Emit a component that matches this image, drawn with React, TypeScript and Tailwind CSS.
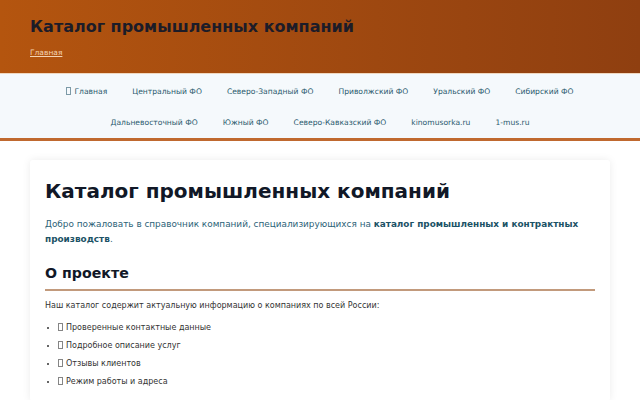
import React from "react";

const Tofu = () => (
  <span className="inline-block w-[5px] h-[8px] border border-current mr-[3px] align-[-1px] opacity-60" />
);

const navRow1 = ["Центральный ФО", "Северо-Западный ФО", "Приволжский ФО", "Уральский ФО", "Сибирский ФО"];
const navRow2 = ["Дальневосточный ФО", "Южный ФО", "Северо-Кавказский ФО", "kinomusorka.ru", "1-mus.ru"];
const items = ["Проверенные контактные данные", "Подробное описание услуг", "Отзывы клиентов", "Режим работы и адреса"];

export default function App() {
  return (
    <div className="min-h-[400px] bg-white" style={{ fontFamily: '"DejaVu Sans", sans-serif' }}>
      <header className="h-[74px] bg-gradient-to-r from-[#b4550f] to-[#8f3f10] px-[30px] pt-[16px] border-b border-[#f0d8c0]">
        <h1 className="text-[16px] font-bold text-[#1c1c28] leading-[22px]">Каталог промышленных компаний</h1>
        <a className="mt-[10px] inline-block text-[7.5px] text-[#f3d3b4] underline leading-[10px]">Главная</a>
      </header>
      <nav className="bg-[#f5f9fc] border-b-[3px] border-[#c0692f] pt-[2px]">
        <div className="flex justify-center gap-x-[25px] h-[31px] items-center">
          <span className="text-[7.6px] text-[#2b5a6e]"><Tofu />Главная</span>
          {navRow1.map((t) => (
            <span key={t} className="text-[7.6px] text-[#2b5a6e]">{t}</span>
          ))}
        </div>
        <div className="flex justify-center gap-x-[25px] h-[31px] items-center">
          {navRow2.map((t) => (
            <span key={t} className="text-[7.6px] text-[#2b5a6e]">{t}</span>
          ))}
        </div>
      </nav>
      <main className="px-[30px] pt-[19px]">
        <div className="bg-white shadow-[0_0_8px_rgba(0,0,0,0.08)] rounded-[3px] px-[15px] pt-[18px] pb-[10px]">
          <h1 className="text-[20px] font-bold text-[#111827] leading-[26px]">Каталог промышленных компаний</h1>
          <p className="mt-[13px] text-[8.9px] leading-[15px] text-[#2b6277]">
            Добро пожаловать в справочник компаний, специализирующихся на{" "}
            <strong className="text-[#1b5266]">каталог промышленных и контрактных производств</strong>.
          </p>
          <h2 className="mt-[16px] text-[14.2px] font-bold text-[#111827] leading-[20px] pb-[6px] border-b-2 border-[#c29a7c]">О проекте</h2>
          <p className="mt-[8px] text-[8px] leading-[13px] text-[#333]">Наш каталог содержит актуальную информацию о компаниях по всей России:</p>
          <ul className="mt-[7px] list-disc pl-[13px] text-[8px] text-[#333]">
            {items.map((t) => (
              <li key={t} className="leading-[18px]"><Tofu />{t}</li>
            ))}
          </ul>
        </div>
      </main>
    </div>
  );
}
